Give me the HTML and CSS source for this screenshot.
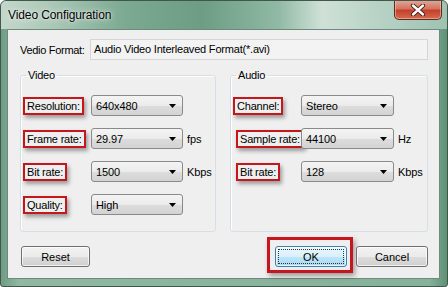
FILE: index.html
```html
<!DOCTYPE html>
<html lang="en">
<head>
    <meta charset="UTF-8">
    <meta name="viewport" content="width=device-width, initial-scale=1.0">
    <title>Video Configuration</title>
    <link rel="stylesheet" href="styles.css">
</head>
<body>

    <!-- Dialog Window -->
    <div class="window">
        <div class="titlebar">
            <span class="title">Video Configuration</span>
            <button class="close">
                <svg width="16" height="12" viewBox="0 0 16 12">
                    <path d="M3 1.5 L13 10.5 M13 1.5 L3 10.5" stroke="#3a1a14" stroke-width="4.2" stroke-linecap="round"/>
                    <path d="M3 1.5 L13 10.5 M13 1.5 L3 10.5" stroke="#ffffff" stroke-width="2.4" stroke-linecap="round"/>
                </svg>
            </button>
        </div>

        <div class="client">
            <div class="format-row">
                <span class="format-label">Vedio Format:</span>
                <div class="format-field">Audio Video Interleaved Format(*.avi)</div>
            </div>

            <div class="groups">
                <!-- Video Group -->
                <fieldset class="group">
                    <legend>Video</legend>
                    <div class="row">
                        <span class="label-col"><span class="mark">Resolution:</span></span>
                        <div class="combo"><span>640x480</span><svg width="7" height="4" viewBox="0 0 7 4"><path d="M0 0 H7 L3.5 4 Z" fill="#000"/></svg></div>
                    </div>
                    <div class="row">
                        <span class="label-col"><span class="mark">Frame rate:</span></span>
                        <div class="combo"><span>29.97</span><svg width="7" height="4" viewBox="0 0 7 4"><path d="M0 0 H7 L3.5 4 Z" fill="#000"/></svg></div>
                        <span class="unit">fps</span>
                    </div>
                    <div class="row">
                        <span class="label-col"><span class="mark">Bit rate:</span></span>
                        <div class="combo"><span>1500</span><svg width="7" height="4" viewBox="0 0 7 4"><path d="M0 0 H7 L3.5 4 Z" fill="#000"/></svg></div>
                        <span class="unit">Kbps</span>
                    </div>
                    <div class="row">
                        <span class="label-col"><span class="mark">Quality:</span></span>
                        <div class="combo"><span>High</span><svg width="7" height="4" viewBox="0 0 7 4"><path d="M0 0 H7 L3.5 4 Z" fill="#000"/></svg></div>
                    </div>
                </fieldset>

                <!-- Audio Group -->
                <fieldset class="group audio">
                    <legend>Audio</legend>
                    <div class="row">
                        <span class="label-col"><span class="mark">Channel:</span></span>
                        <div class="combo"><span>Stereo</span><svg width="7" height="4" viewBox="0 0 7 4"><path d="M0 0 H7 L3.5 4 Z" fill="#000"/></svg></div>
                    </div>
                    <div class="row">
                        <span class="label-col"><span class="mark shift">Sample rate:</span></span>
                        <div class="combo"><span>44100</span><svg width="7" height="4" viewBox="0 0 7 4"><path d="M0 0 H7 L3.5 4 Z" fill="#000"/></svg></div>
                        <span class="unit">Hz</span>
                    </div>
                    <div class="row">
                        <span class="label-col"><span class="mark shift">Bit rate:</span></span>
                        <div class="combo"><span>128</span><svg width="7" height="4" viewBox="0 0 7 4"><path d="M0 0 H7 L3.5 4 Z" fill="#000"/></svg></div>
                        <span class="unit">Kbps</span>
                    </div>
                </fieldset>
            </div>

            <div class="actions">
                <button class="btn reset">Reset</button>
                <span class="spacer"></span>
                <span class="ok-mark"><button class="btn ok"><span class="focus">OK</span></button></span>
                <button class="btn cancel">Cancel</button>
            </div>
        </div>
    </div>

</body>
</html>
```

FILE: styles.css
```css
/* Global Styles */
body {
    margin: 0;
    padding: 0;
    font-family: 'Liberation Sans', Arial, sans-serif;
    font-size: 11px;
    color: #000;
    background: #ffffff;
}

/* Window Frame */
.window {
    width: 448px;
    height: 287px;
    box-sizing: border-box;
    border: 1px solid #42564c;
    border-radius: 6px 6px 3px 3px;
    background: linear-gradient(to right, #6f9c85 0%, #8fb7a2 4%, #86b19b 96%, #5f8f78 100%);
    overflow: hidden;
}

/* Title Bar */
.titlebar {
    height: 28px;
    display: flex;
    align-items: flex-start;
    background: linear-gradient(to right, #c3d7cb 0%, #a9c7b6 12%, #7ba991 28%, #6d9d85 45%, #8fb9a4 62%, #cfe1d7 72%, #b9d3c6 84%, #9fc2b1 100%);
}

.title {
    font-size: 12px;
    letter-spacing: -0.1px;
    padding-left: 7px;
    line-height: 29px;
    text-shadow: 0 0 6px rgba(255, 255, 255, 0.9), 0 0 2px rgba(255, 255, 255, 0.8);
}

.close {
    margin-left: auto;
    margin-right: 5px;
    margin-top: -1px;
    width: 48px;
    height: 20px;
    border: 1px solid #5b2a22;
    border-top: none;
    border-radius: 0 0 5px 5px;
    background: linear-gradient(to bottom, #e4a999 0%, #d37560 45%, #c2412a 55%, #d56a4c 100%);
    box-shadow: inset 0 0 0 1px rgba(255, 210, 200, 0.5);
    display: flex;
    justify-content: center;
    align-items: center;
    padding: 0;
}

/* Client Area */
.client {
    margin: 0 7px 0 6px;
    height: 250px;
    box-sizing: border-box;
    border: 1px solid #6f8a7d;
    background: #efefef;
    padding: 0 11px 0 12px;
}

.format-row {
    display: flex;
    align-items: center;
    margin-top: 9px;
    height: 21px;
}

.format-label {
    width: 70px;
    letter-spacing: -0.3px;
}

.format-field {
    flex: 1;
    height: 21px;
    box-sizing: border-box;
    border: 1px solid #d6d6d6;
    background: #f3f3f3;
    padding-left: 3px;
    line-height: 19px;
    letter-spacing: -0.2px;
}

/* Group Boxes */
.groups {
    display: flex;
    gap: 14px;
    margin-top: 9px;
}

.group {
    margin: 0;
    width: 196px;
    box-sizing: border-box;
    border: 1px solid #d5dfe5;
    border-radius: 3px;
    box-shadow: inset 1px 1px 0 #ffffff;
    padding: 13px 0 16px 2px;
    display: flex;
    flex-direction: column;
    gap: 12px;
}

.group.audio {
    width: 198px;
}

.group legend {
    margin-left: 3px;
    padding: 0 2px;
    line-height: 13px;
    letter-spacing: -0.2px;
}

.row {
    display: flex;
    align-items: center;
    height: 21px;
}

.label-col {
    width: 68px;
    white-space: nowrap;
}

/* Red annotation boxes */
.mark {
    display: inline-block;
    border: 2px solid #c4161c;
    padding: 1px 2px 0 2px;
    line-height: 13px;
    letter-spacing: -0.2px;
    white-space: nowrap;
    box-shadow: 2px 3px 4px rgba(0, 0, 0, 0.35);
}

.mark.shift {
    margin-left: 3px;
}

/* Combo Boxes */
.combo {
    width: 92px;
    height: 21px;
    box-sizing: border-box;
    border: 1px solid #8a8a8a;
    border-radius: 3px;
    background: linear-gradient(to bottom, #f4f4f4 0%, #ebebeb 50%, #dddddd 51%, #d3d3d3 100%);
    display: flex;
    align-items: center;
    justify-content: space-between;
    padding: 0 6px 0 4px;
    letter-spacing: -0.1px;
}

.group.audio .combo {
    width: 93px;
}

.unit {
    margin-left: 4px;
    letter-spacing: -0.1px;
}

/* Bottom Buttons */
.actions {
    display: flex;
    align-items: center;
    margin-top: 14px;
}

.spacer {
    flex: 1;
}

.btn {
    height: 21px;
    box-sizing: border-box;
    border: 1px solid #707070;
    border-radius: 3px;
    background: linear-gradient(to bottom, #f2f2f2 0%, #ebebeb 50%, #dddddd 51%, #cfcfcf 100%);
    box-shadow: inset 0 0 0 1px rgba(255, 255, 255, 0.7);
    font-family: 'Liberation Sans', Arial, sans-serif;
    font-size: 11px;
    color: #000;
    padding: 0;
}

.reset {
    width: 69px;
    margin-left: 1px;
}

.ok-mark {
    display: inline-block;
    border: 3px solid #c4161c;
    padding: 6px 3px 3px 5px;
    margin: -9px -6px -6px -8px;
    box-shadow: 2px 3px 5px rgba(0, 0, 0, 0.35);
}

.ok {
    display: block;
    width: 72px;
    border-color: #3c7fb1;
    background: linear-gradient(to bottom, #eaf6fd 0%, #d9f0fc 50%, #bee6fd 51%, #a7d9f5 100%);
    padding: 2px;
}

.ok .focus {
    display: block;
    height: 15px;
    line-height: 15px;
    border: 1px dotted #333;
    box-sizing: border-box;
}

.cancel {
    width: 72px;
    margin-left: 9px;
}
```
